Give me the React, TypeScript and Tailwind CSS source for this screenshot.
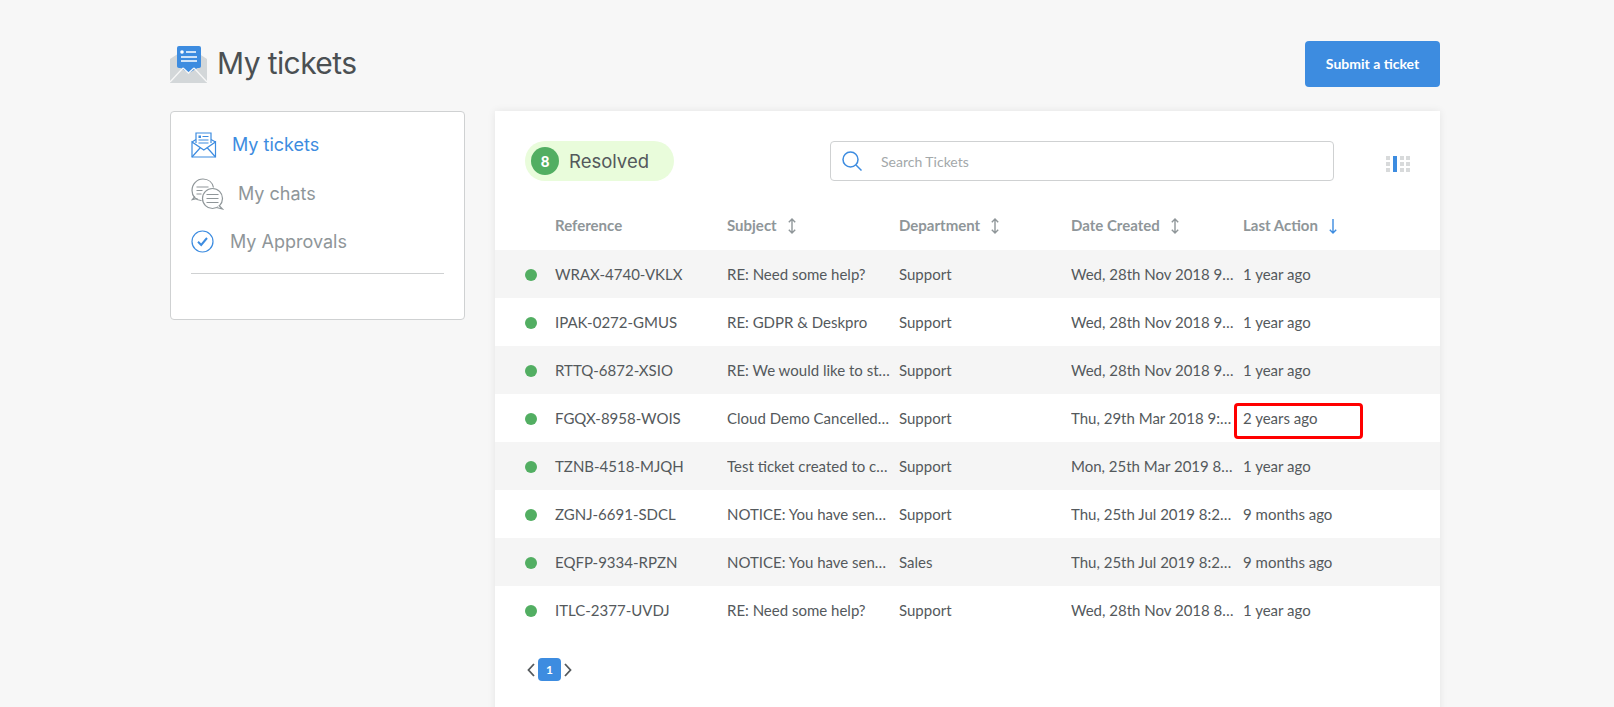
const rows = [
  ["WRAX-4740-VKLX", "RE: Need some help?", "Support", "Wed, 28th Nov 2018 9:41 am", "1 year ago"],
  ["IPAK-0272-GMUS", "RE: GDPR & Deskpro", "Support", "Wed, 28th Nov 2018 9:38 am", "1 year ago"],
  ["RTTQ-6872-XSIO", "RE: We would like to start a trial", "Support", "Wed, 28th Nov 2018 9:35 am", "1 year ago"],
  ["FGQX-8958-WOIS", "Cloud Demo Cancelled by customer", "Support", "Thu, 29th Mar 2018 9:12 am", "2 years ago"],
  ["TZNB-4518-MJQH", "Test ticket created to check", "Support", "Mon, 25th Mar 2019 8:20 am", "1 year ago"],
  ["ZGNJ-6691-SDCL", "NOTICE: You have sent too many", "Support", "Thu, 25th Jul 2019 8:22 am", "9 months ago"],
  ["EQFP-9334-RPZN", "NOTICE: You have sent too many", "Sales", "Thu, 25th Jul 2019 8:23 am", "9 months ago"],
  ["ITLC-2377-UVDJ", "RE: Need some help?", "Support", "Wed, 28th Nov 2018 8:50 am", "1 year ago"],
]

function SortIcon() {
  return (
    <svg width="10" height="16" viewBox="0 0 10 16" fill="none" stroke="#8f9699" strokeWidth="1.4" className="ml-[10px] mt-0.5">
      <path d="M5 1v14M1.8 4.2 5 1l3.2 3.2M1.8 11.8 5 15l3.2-3.2" />
    </svg>
  )
}

function TitleIcon() {
  return (
    <svg width="37" height="37" viewBox="0 0 37 37">
      <path d="M0 13 18.500 1 37 13v24H0z" fill="#d3d7d9" />
      <rect x="7" y="0" width="24" height="22" rx="2" fill="#3d8ce0" />
      <path d="M7 20h24l-12 7z" fill="#3d8ce0" />
      <circle cx="12" cy="6" r="1.800" fill="#fff" />
      <path d="M16 6h10M11 11h16M11 15h16" stroke="#fff" strokeWidth="1.600" />
      <path d="M0 36 13 22M37 36 24 22M13 22 18.500 27 24 22" stroke="#f7f7f7" strokeWidth="1.300" fill="none" />
    </svg>
  )
}

function TicketsIcon() {
  return (
    <svg width="26" height="26" viewBox="0 0 26 26" fill="none" stroke="#3d8ce0" strokeWidth="1.200">
      <path d="M5 11V1h15v10" />
      <path d="M1 10 5 7.500M24.500 10 20 7.500M1 10v15h23.500V10L12.800 18z" />
      <path d="M1 25 9.500 15.500M24.500 25 16 15.500" />
      <rect x="7.500" y="3.500" width="2.500" height="2.500" fill="#3d8ce0" stroke="none" />
      <path d="M11.500 4.500h6M7.500 8h10M7.500 11h10" />
    </svg>
  )
}

function ChatsIcon() {
  return (
    <svg width="33" height="32" viewBox="0 0 33 32" fill="none" stroke="#8f9699" strokeWidth="1.200">
      <path d="M10.500 22.500C5 22.800 1 18 1 12.500 1 6 6 1 12 1c5.500 0 9.500 3.500 10.500 8.500" fill="#fff" />
      <path d="M4 18.500 1.500 21.500 6.500 20.500" />
      <path d="M5.500 9h12M5.500 12.500h6M5.500 16h5" />
      <circle cx="21.500" cy="20.500" r="10" fill="#fff" />
      <path d="M28 27.500l3.500 3.500-6-1.500" fill="#fff" />
      <path d="M15.500 16.500h12M15.500 20.500h12M15.500 24.500h12" />
    </svg>
  )
}

function ApprovalsIcon() {
  return (
    <svg width="23" height="23" viewBox="0 0 23 23" fill="none" stroke="#3d8ce0">
      <circle cx="11.500" cy="11.500" r="10.500" strokeWidth="1.200" />
      <path d="M7 11.800 10.200 15 16 8" strokeWidth="2" />
    </svg>
  )
}

function ColumnsIcon() {
  const cells = ["a", "b", "c"]
  return (
    <div className="flex gap-[2px]">
      <div className="flex flex-col gap-[2px]">
        {cells.map((c) => <div key={c} className="w-1 h-1 bg-[#d8dadb]" />)}
      </div>
      <div className="w-1 h-4 ml-[1px] bg-[#3d8ce0]" />
      <div className="flex flex-col gap-[2px] ml-[1px]">
        {cells.map((c) => <div key={c} className="w-1 h-1 bg-[#d8dadb]" />)}
      </div>
      <div className="flex flex-col gap-[2px]">
        {cells.map((c) => <div key={c} className="w-1 h-1 bg-[#d8dadb]" />)}
      </div>
    </div>
  )
}

export default function App() {
  return (
    <div className="h-[707px] overflow-hidden bg-[#f7f7f7] pl-[170px] pr-[174px] pt-[41px] font-['Lato',sans-serif] text-[#54595c]">
      <div className="flex items-center justify-between h-[46px]">
        <div className="flex items-center gap-[10px]">
          <TitleIcon />
          <h1 className="font-['Inter',sans-serif] text-[30px] leading-9 text-[#4b5053] tracking-[-0.6px] -mt-[3px]">My tickets</h1>
        </div>
        <button className="w-[135px] h-[46px] rounded bg-[#3d8ce0] text-white text-sm font-bold">Submit a ticket</button>
      </div>

      <div className="flex gap-[30px] mt-6 items-start">
        <aside className="w-[295px] h-[209px] shrink-0 rounded bg-white border border-[#cfd1d2] px-[20px] font-['Inter',sans-serif] text-lg text-[#8f9699]">
          <div className="flex items-center h-[26px] mt-5 text-[#3d8ce0]">
            <TicketsIcon />
            <span className="ml-[15px]">My tickets</span>
          </div>
          <div className="flex items-center h-8 mt-5">
            <ChatsIcon />
            <span className="ml-[14px]">My chats</span>
          </div>
          <div className="flex items-center h-[23px] mt-5">
            <ApprovalsIcon />
            <span className="ml-[16px]">My Approvals</span>
          </div>
          <div className="border-t border-[#cfd1d2] mt-5" />
        </aside>

        <main className="flex-1 h-[620px] bg-white shadow-[0_0_8px_rgba(0,0,0,0.08)]">
          <div className="flex items-center h-10 mt-[30px] pl-[30px]">
            <div className="flex items-center w-[149px] h-10 rounded-full bg-[#e9fcdb] pl-[6px]">
              <span className="flex items-center justify-center w-7 h-7 rounded-full bg-[#52ae62] text-white text-[15px] font-black">8</span>
              <span className="ml-[10px] mt-[2px] font-['Inter',sans-serif] text-[18.500px] text-[#54595c]">Resolved</span>
            </div>
            <div className="flex items-center w-[504px] h-10 ml-[156px] rounded border border-[#cfd1d2] pl-[11px]">
              <svg width="20" height="20" viewBox="0 0 20 20" fill="none" stroke="#3d8ce0" strokeWidth="1.500">
                <circle cx="8.500" cy="8.500" r="7.500" />
                <path d="m14 14 5.500 5.500" />
              </svg>
              <span className="ml-[19px] mt-[1px] text-sm text-[#a3a8aa]">Search Tickets</span>
            </div>
            <div className="ml-[52px] mt-[5px]">
              <ColumnsIcon />
            </div>
          </div>

          <div className="grid grid-cols-[60px_172px_172px_172px_172px_1fr] items-center h-[69px] pt-[19px] text-[15px] font-bold text-[#8f9699]">
            <div />
            <div>Reference</div>
            <div className="flex items-center">Subject<SortIcon /></div>
            <div className="flex items-center">Department<SortIcon /></div>
            <div className="flex items-center">Date Created<SortIcon /></div>
            <div className="flex items-center">
              Last Action
              <svg width="10" height="16" viewBox="0 0 10 16" fill="none" stroke="#3d8ce0" strokeWidth="1.400" className="ml-[10px] mt-0.5">
                <path d="M5 1v14M1.800 11.800 5 15l3.200-3.200" />
              </svg>
            </div>
          </div>

          {rows.map((r, i) => (
            <div key={r[0]} className={`grid grid-cols-[60px_172px_172px_172px_172px_1fr] items-center h-12 pt-[1px] text-[15px] ${i % 2 === 0 ? "bg-[#f5f5f5]" : "bg-white"}`}>
              <div className="pl-[30px]">
                <div className="w-3 h-3 mt-[1px] rounded-full bg-[#52ae62]" />
              </div>
              <div>{r[0]}</div>
              <div className="truncate pr-[8px]">{r[1]}</div>
              <div>{r[2]}</div>
              <div className="truncate pr-[8px]">{r[3]}</div>
              <div className="relative">
                {r[4]}
                {i === 3 && <div className="absolute -left-[9px] -top-[4px] w-[129px] h-9 rounded-sm border-[3px] border-[#ff0000]" />}
              </div>
            </div>
          ))}

          <div className="flex items-center mt-6 pl-[32px]">
            <svg width="8" height="14" viewBox="0 0 8 14" fill="none" stroke="#54595c" strokeWidth="1.800">
              <path d="M7 1 1.500 7 7 13" />
            </svg>
            <div className="flex items-center justify-center w-[23px] h-[23px] ml-[3px] rounded-sm bg-[#3d8ce0] text-white text-xs font-bold">1</div>
            <svg width="8" height="14" viewBox="0 0 8 14" fill="none" stroke="#54595c" strokeWidth="1.800" className="ml-[3px]">
              <path d="M1 1 6.500 7 1 13" />
            </svg>
          </div>
        </main>
      </div>
    </div>
  )
}
